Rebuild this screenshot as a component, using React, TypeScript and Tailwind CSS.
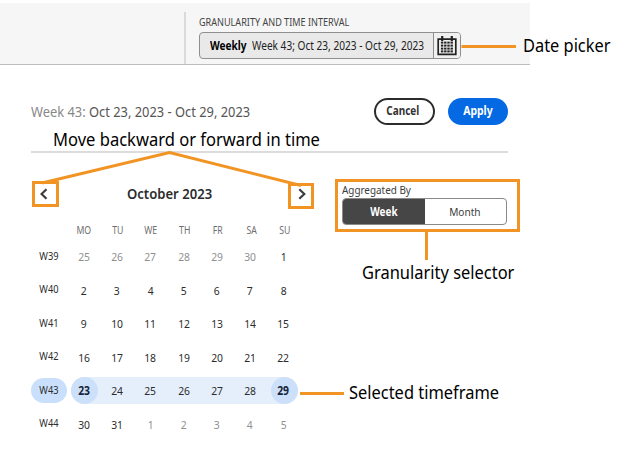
const weekdays = ["MO", "TU", "WE", "TH", "FR", "SA", "SU"];

const weeks = [
  { label: "W39", days: [25, 26, 27, 28, 29, 30, 1], muted: [0, 5] },
  { label: "W40", days: [2, 3, 4, 5, 6, 7, 8], muted: null },
  { label: "W41", days: [9, 10, 11, 12, 13, 14, 15], muted: null },
  { label: "W42", days: [16, 17, 18, 19, 20, 21, 22], muted: null },
  { label: "W43", days: [23, 24, 25, 26, 27, 28, 29], muted: null, selected: true },
  { label: "W44", days: [30, 31, 1, 2, 3, 4, 5], muted: [2, 6] },
];

function CalendarIcon() {
  return (
    <svg width="20" height="20" viewBox="0 0 20 20" fill="none">
      <path d="M1.2 3.2h17.6v15.2H1.2z" stroke="#222" strokeWidth="1.7" />
      <path d="M5.2 0v5M14.8 0v5" stroke="#222" strokeWidth="2.2" />
      {[5.6, 8.6, 11.6, 14.4].map((y) =>
        [3.9, 7.1, 10.3, 13.5].map((x) => (
          <rect key={`${x}-${y}`} x={x} y={y} width="2.4" height="2" fill="#222" />
        )),
      )}
    </svg>
  );
}

function Chevron({ forward = false }: { forward?: boolean }) {
  return (
    <svg className="shrink-0" width="8" height="12" viewBox="0 0 8 12" fill="none">
      <path
        d={forward ? "M1.3 1.2 6.3 6l-5 4.8" : "M6.5 1.2 1.5 6l5 4.8"}
        stroke="#3c3c3c"
        strokeWidth="2.2"
      />
    </svg>
  );
}

function Header() {
  return (
    <header className="mt-[3px] flex h-[62px] w-[530px] border-b border-[#bdbdbd] bg-[#f6f6f6]">
      <div className="mt-[9px] ml-[184px] w-[2px] bg-[#dadada]" />
      <div className="ml-[13px] pt-[12px]">
        <div className="h-[17px] w-[200px] origin-left scale-x-[0.908] text-[10px] leading-[14px] whitespace-nowrap text-[#444]">
          GRANULARITY AND TIME INTERVAL
        </div>
        <div className="flex h-[27px] w-[262px] overflow-hidden rounded-[4px] border border-[#8f8f8f] bg-[#e9e9e9]">
          <div className="flex w-[233px] items-center pl-[10px] text-[12px] whitespace-nowrap text-[#222]">
            <span className="w-[42px] shrink-0 origin-left scale-x-[0.84] font-bold text-black">Weekly</span>
            <span className="origin-left scale-x-[0.842]">Week 43; Oct 23, 2023 - Oct 29, 2023</span>
          </div>
          <button className="flex flex-1 items-center justify-center border-l border-[#8f8f8f] bg-[#f0f0f0]">
            <CalendarIcon />
          </button>
        </div>
      </div>
    </header>
  );
}

function Calendar() {
  return (
    <div className="w-[271px]">
      <div className="flex h-[24px] items-center pl-[9px]">
        <Chevron />
        <span className="ml-[79px] w-[85px] origin-left scale-x-[0.935] text-[14px] leading-[24px] font-semibold whitespace-nowrap text-[#2c2c2c]">
          October 2023
        </span>
        <span className="ml-[86px]">
          <Chevron forward />
        </span>
      </div>
      <div className="mt-[16px] mb-px grid h-[17px] grid-cols-[36px_repeat(7,33.5px)] items-center text-center text-[10px] text-[#6e6e6e]">
        <span />
        {weekdays.map((d) => (
          <span key={d} className="scale-x-[0.87]">{d}</span>
        ))}
      </div>
      {weeks.map((w) => (
        <div key={w.label} className="flex h-[33.5px] items-center text-[11.5px] text-[#2c2c2c]">
          <div
            className={
              w.selected
                ? "flex h-[25px] w-[36px] items-center justify-center rounded-full bg-[#c9dffb] text-[10.5px]"
                : "flex h-[25px] w-[36px] items-center justify-center text-[10.5px]"
            }
          >
            <span className="scale-x-[0.88]">{w.label}</span>
          </div>
          <div
            className={
              w.selected
                ? "ml-[4px] flex h-[27px] w-[226.5px] items-center justify-between rounded-full bg-[#e5effc]"
                : "ml-[4px] flex h-[27px] w-[226.5px] items-center justify-between"
            }
          >
            {w.days.map((d, i) => (
              <div
                key={i}
                className={
                  w.selected && (i === 0 || i === 6)
                    ? "flex size-[27px] items-center justify-center rounded-full bg-[#cce0fa] font-bold text-[#142338]"
                    : w.muted && i >= w.muted[0] && i <= w.muted[1]
                      ? "flex size-[27px] items-center justify-center text-[#909090]"
                      : "flex size-[27px] items-center justify-center"
                }
              >
                <span className="-translate-x-[0.5px] scale-x-[0.9]">{d}</span>
              </div>
            ))}
          </div>
        </div>
      ))}
    </div>
  );
}

function GranularitySelector() {
  return (
    <div className="w-[165px]">
      <div className="h-[17px] w-[90px] origin-left scale-x-[0.86] text-[11.5px] leading-[17px] whitespace-nowrap text-[#3c3c3c]">
        Aggregated By
      </div>
      <div className="flex h-[27px] overflow-hidden rounded-[4px] border border-[#8a8a8a] text-[11.5px]">
        <button className="w-[82px] bg-[#464646] font-bold text-white">
          <span className="inline-block scale-x-[0.86]">Week</span>
        </button>
        <button className="flex-1 pr-[2px] text-[#3c3c3c]">
          <span className="inline-block scale-x-[0.88]">Month</span>
        </button>
      </div>
    </div>
  );
}

function Callouts() {
  return (
    <div className="pointer-events-none absolute inset-0 text-[18px] leading-[24px] whitespace-nowrap text-black">
      <svg className="absolute inset-0" width="624" height="461" fill="none" stroke="#f29423" strokeWidth="3">
        <path d="M42 183 169.500 152.500 301 185.500" />
        <path d="M461.500 46.500H516M300 393.500H344M426.500 232V260" />
        <path d="M33.500 182.500h24v23h-24zM289.500 184.500h23v23h-23zM336.500 180.500h182v50h-182z" />
      </svg>
      <span className="absolute top-[33px] left-[523px] origin-left scale-x-[0.91]">Date picker</span>
      <span className="absolute top-[127px] left-[53px] origin-left scale-x-[0.919]">Move backward or forward in time</span>
      <span className="absolute top-[260px] left-[362px] origin-left scale-x-[0.914]">Granularity selector</span>
      <span className="absolute top-[380px] left-[349px] origin-left scale-x-[0.913]">Selected timeframe</span>
    </div>
  );
}

export default function App() {
  return (
    <div className="relative flex h-[461px] w-[624px] flex-col overflow-hidden bg-white font-['Noto_Sans',sans-serif]">
      <Header />
      <main className="ml-[31px] w-[477px]">
        <div className="flex h-[88px] items-center border-b-2 border-[#dcdcdc] pt-[7px]">
          <div className="w-[343px] origin-left scale-x-[0.858] text-[15px] whitespace-nowrap text-[#555]">
            <span className="text-[#888]">Week 43: </span>Oct 23, 2023 - Oct 29, 2023
          </div>
          <button className="-mt-px h-[27px] w-[61px] shrink-0 rounded-full border-2 border-[#2c2c2c] text-[12px] font-bold text-[#333]">
            <span className="-ml-[3px] inline-block scale-x-[0.83]">Cancel</span>
          </button>
          <button className="-mt-px ml-[13px] h-[27px] w-[60px] shrink-0 rounded-full bg-[#0469e3] text-[12px] font-bold text-white">
            <span className="inline-block scale-x-[0.87]">Apply</span>
          </button>
        </div>
        <div className="flex pt-[28px]">
          <div className="pt-px">
            <Calendar />
          </div>
          <div className="ml-[40px]">
            <GranularitySelector />
          </div>
        </div>
      </main>
      <Callouts />
    </div>
  );
}
